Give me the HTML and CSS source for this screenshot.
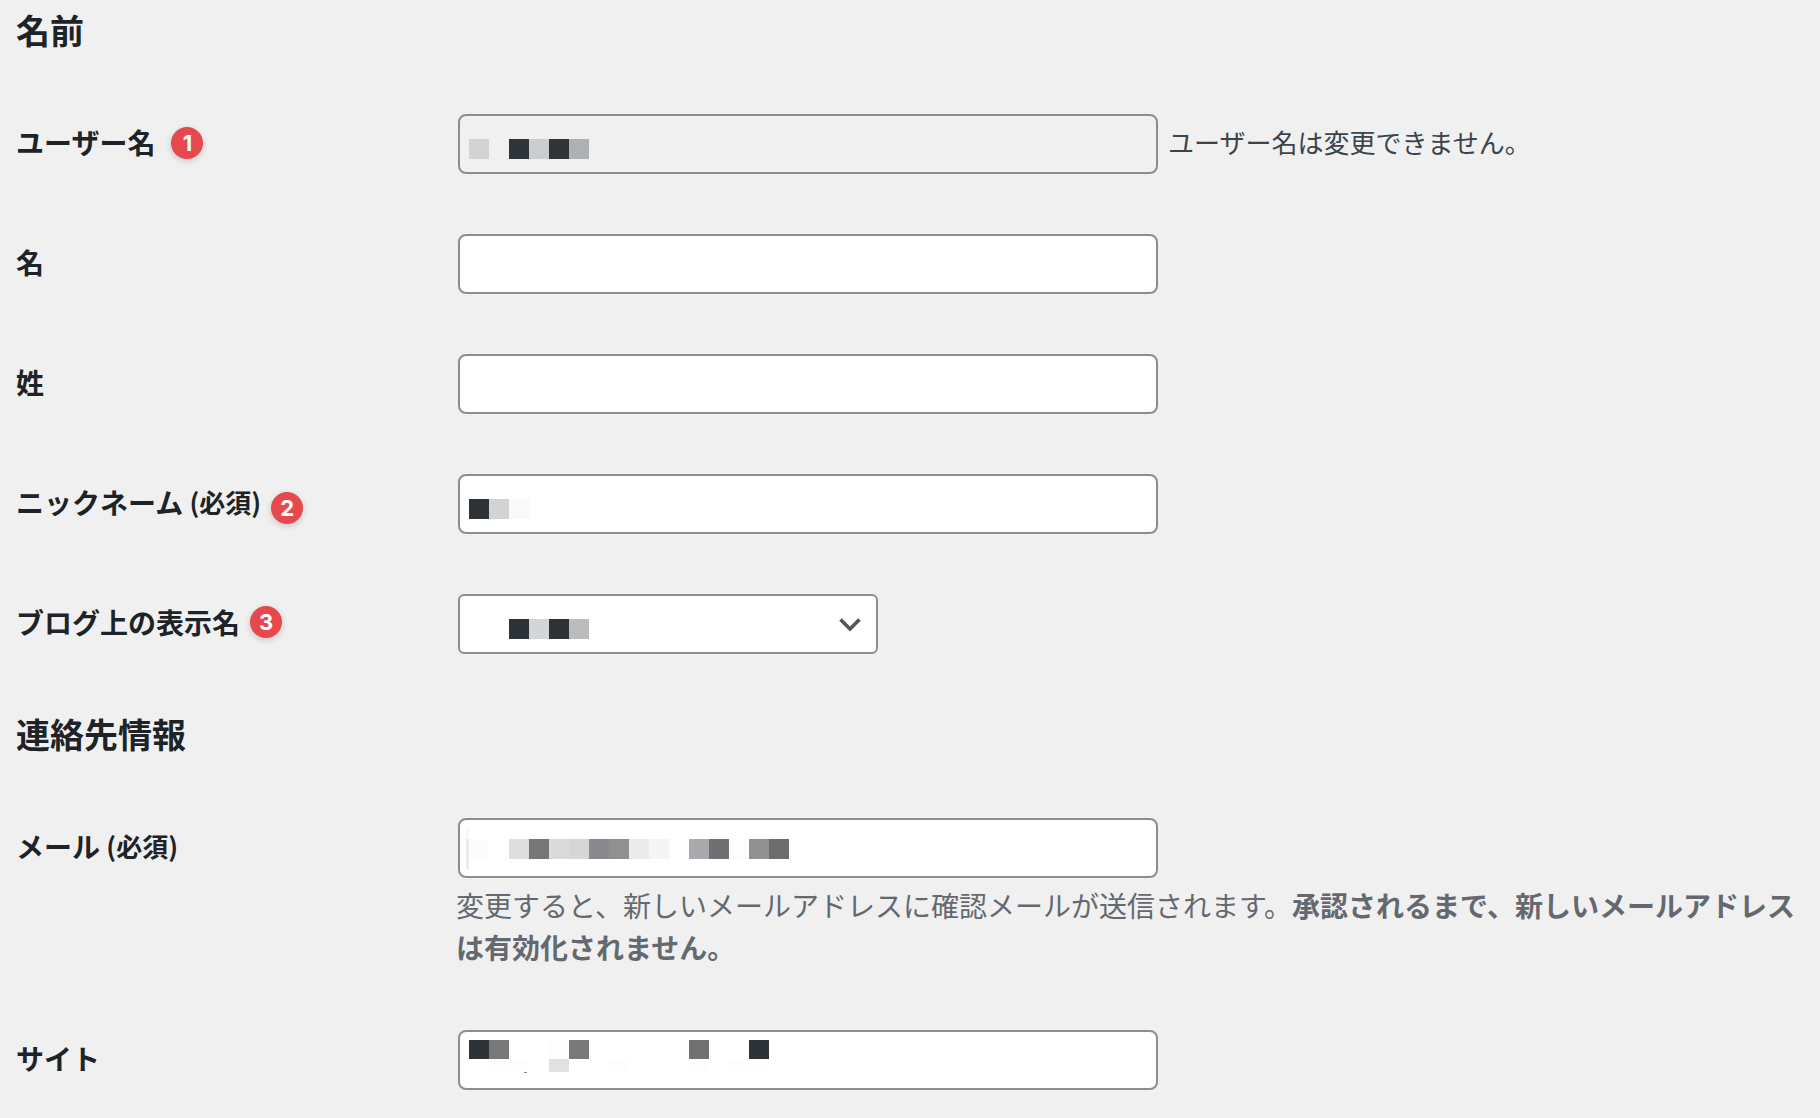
FILE: index.html
```html
<!DOCTYPE html>
<html lang="ja">
<head>
<meta charset="utf-8">
<meta name="viewport" content="width=device-width, initial-scale=1">
<title>プロフィール</title>
<link rel="stylesheet" href="styles.css">
</head>
<body>
<form class="profile">
  <h2 class="section-title">名前</h2>
  <div class="fields">
    <div class="row">
      <label class="row-label" for="user">ユーザー名<span class="badge badge-username">1</span></label>
      <div class="row-body inline">
        <div class="control">
          <input class="text-input" id="user" type="text" disabled>
          <svg class="mosaic" width="200" height="60" aria-hidden="true">
            <path fill="#d2d3d5" d="M11 25h20v20h-20z"/>
            <path fill="#2f3439" d="M51 25h20v20h-20zM91 25h20v20h-20z"/>
            <path fill="#cccdcf" d="M71 25h20v20h-20z"/>
            <path fill="#adb1b4" d="M111 25h20v20h-20z"/>
          </svg>
        </div>
        <span class="hint">ユーザー名は変更できません。</span>
      </div>
    </div>
    <div class="row">
      <label class="row-label" for="first">名</label>
      <div class="row-body"><div class="control"><input class="text-input" id="first" type="text"></div></div>
    </div>
    <div class="row">
      <label class="row-label" for="last">姓</label>
      <div class="row-body"><div class="control"><input class="text-input" id="last" type="text"></div></div>
    </div>
    <div class="row">
      <label class="row-label" for="nick">ニックネーム&nbsp;<span class="required">(必須)</span><span class="badge badge-nickname">2</span></label>
      <div class="row-body">
        <div class="control">
          <input class="text-input" id="nick" type="text">
          <svg class="mosaic" width="200" height="60" aria-hidden="true">
            <path fill="#2e3338" d="M11 25h20v20h-20z"/>
            <path fill="#d2d3d5" d="M31 25h20v20h-20z"/>
            <path fill="#f9f9f9" d="M51 25h20v20h-20z"/>
          </svg>
        </div>
      </div>
    </div>
    <div class="row">
      <label class="row-label" for="display">ブログ上の表示名<span class="badge badge-display">3</span></label>
      <div class="row-body">
        <div class="control control-select">
          <select class="select" id="display"><option></option></select>
          <svg class="mosaic" width="200" height="60" aria-hidden="true">
            <path fill="#2e3338" d="M51 25h20v20h-20zM91 25h20v20h-20z"/>
            <path fill="#d4d5d7" d="M71 25h20v20h-20z"/>
            <path fill="#bbbcbd" d="M111 25h20v20h-20z"/>
          </svg>
          <svg class="chevron" width="24" height="16" viewBox="0 0 24 16" aria-hidden="true">
            <path d="M2.5 2.5L12 12L21.5 2.5" fill="none" stroke="#555558" stroke-width="3.6"/>
          </svg>
        </div>
      </div>
    </div>
  </div>

  <h2 class="section-title">連絡先情報</h2>
  <div class="fields">
    <div class="row">
      <label class="row-label" for="email">メール&nbsp;<span class="required">(必須)</span></label>
      <div class="row-body">
        <div class="control">
          <input class="text-input" id="email" type="email">
          <svg class="mosaic" width="400" height="60" aria-hidden="true">
            <path fill="#fafdfc" d="M11 21h20v20h-20z"/>
            <path fill="#f8f8f8" d="M8 12h3v9h-3z"/>
            <path fill="#ececec" d="M8 21h3v30h-3z"/>
            <path fill="#dddfde" d="M51 21h20v20h-20z"/>
            <path fill="#757677" d="M71 21h20v20h-20z"/>
            <path fill="#d9dbda" d="M91 21h20v20h-20z"/>
            <path fill="#d5d7d6" d="M111 21h20v20h-20z"/>
            <path fill="#898a8d" d="M131 21h20v20h-20z"/>
            <path fill="#8f9092" d="M151 21h20v20h-20z"/>
            <path fill="#ebebeb" d="M171 21h20v20h-20z"/>
            <path fill="#f5f5f5" d="M191 21h20v20h-20z"/>
            <path fill="#a9aaad" d="M231 21h20v20h-20z"/>
            <path fill="#6f7072" d="M251 21h20v20h-20z"/>
            <path fill="#fdfdfd" d="M271 21h20v20h-20z"/>
            <path fill="#8f9193" d="M291 21h20v20h-20z"/>
            <path fill="#6c6d6f" d="M311 21h20v20h-20z"/>
          </svg>
        </div>
        <p class="description">変更すると、新しいメールアドレスに確認メールが送信されます。<strong>承認されるまで、新しいメールアドレスは有効化されません。</strong></p>
      </div>
    </div>
    <div class="row">
      <label class="row-label" for="site">サイト</label>
      <div class="row-body">
        <div class="control">
          <input class="text-input" id="site" type="url">
          <svg class="mosaic" width="400" height="60" aria-hidden="true">
            <path fill="#2e3338" d="M11 10h20v19h-20zM291 10h20v19h-20z"/>
            <path fill="#777879" d="M31 10h20v19h-20zM111 10h20v19h-20z"/>
            <path fill="#707173" d="M231 10h20v19h-20z"/>
            <path fill="#fdfdfd" d="M91 10h20v19h-20zM31 29h40v13h-40zM151 29h20v13h-20zM231 29h20v13h-20zM271 29h40v13h-40z"/>
            <path fill="#e1e1e1" d="M91 29h20v13h-20z"/>
            <path fill="#88898b" d="M66 42h3v1h-3z"/>
          </svg>
        </div>
      </div>
    </div>
  </div>
</form>
</body>
</html>
```
FILE: styles.css
```css
* {
  box-sizing: border-box;
}

body {
  margin: 0;
  background: #f0f0f0;
  color: #1d2327;
  font-family: "Noto Sans CJK JP", sans-serif;
  font-size: 28px;
}

.profile {
  padding: 6px 16px 28px;
}

.section-title {
  margin: 0 0 60px;
  font-size: 34px;
  line-height: 48px;
  font-weight: 700;
}

.fields {
  display: grid;
  gap: 60px;
  margin-bottom: 56px;
}

.fields:last-child {
  margin-bottom: 0;
}

.row {
  display: grid;
  grid-template-columns: 440px minmax(0, 1fr);
  align-items: start;
}

.row-label {
  position: relative;
  display: flex;
  align-items: center;
  justify-self: start;
  height: 60px;
  padding-bottom: 4px;
  font-weight: 700;
  line-height: 40px;
  white-space: nowrap;
}

.required {
  font-size: 26px;
}

/* Numbered markers pinned beside the labels */
.badge {
  position: absolute;
  left: 100%;
  top: 13px;
  width: 32px;
  height: 32px;
  border-radius: 50%;
  background: #e5484d;
  box-shadow: 0 2px 6px rgba(0, 0, 0, 0.18);
  color: #fff;
  font-family: Inter, sans-serif;
  font-size: 22px;
  font-weight: 700;
  line-height: 32px;
  text-align: center;
}

.badge-username {
  margin-left: 16px;
}

.badge-nickname {
  top: 18px;
  margin-left: 10px;
}

.badge-display {
  top: 12px;
  margin-left: 10px;
}

.inline {
  display: flex;
  align-items: center;
  gap: 10px;
}

.control {
  position: relative;
  width: 700px;
  max-width: 100%;
  margin-left: 2px;
}

.control-select {
  width: 420px;
}

.text-input,
.select {
  display: block;
  width: 100%;
  height: 60px;
  margin: 0;
  padding: 0 16px;
  border: 2px solid #8c8c94;
  border-radius: 8px;
  background: #fff;
  color: #2c3338;
  font: inherit;
}

.text-input:disabled {
  background: #f0f0f0;
}

.select {
  border-radius: 6px;
  appearance: none;
}

.mosaic {
  position: absolute;
  left: 0;
  top: 0;
  pointer-events: none;
  shape-rendering: crispEdges;
}

.chevron {
  position: absolute;
  right: 16px;
  top: 23px;
  pointer-events: none;
}

.hint {
  padding-bottom: 4px;
  color: #3c434a;
  font-size: 26px;
  line-height: 40px;
}

.description {
  margin: 6px 0 0;
  padding-bottom: 2px;
  color: #646970;
  line-height: 42px;
}
```
